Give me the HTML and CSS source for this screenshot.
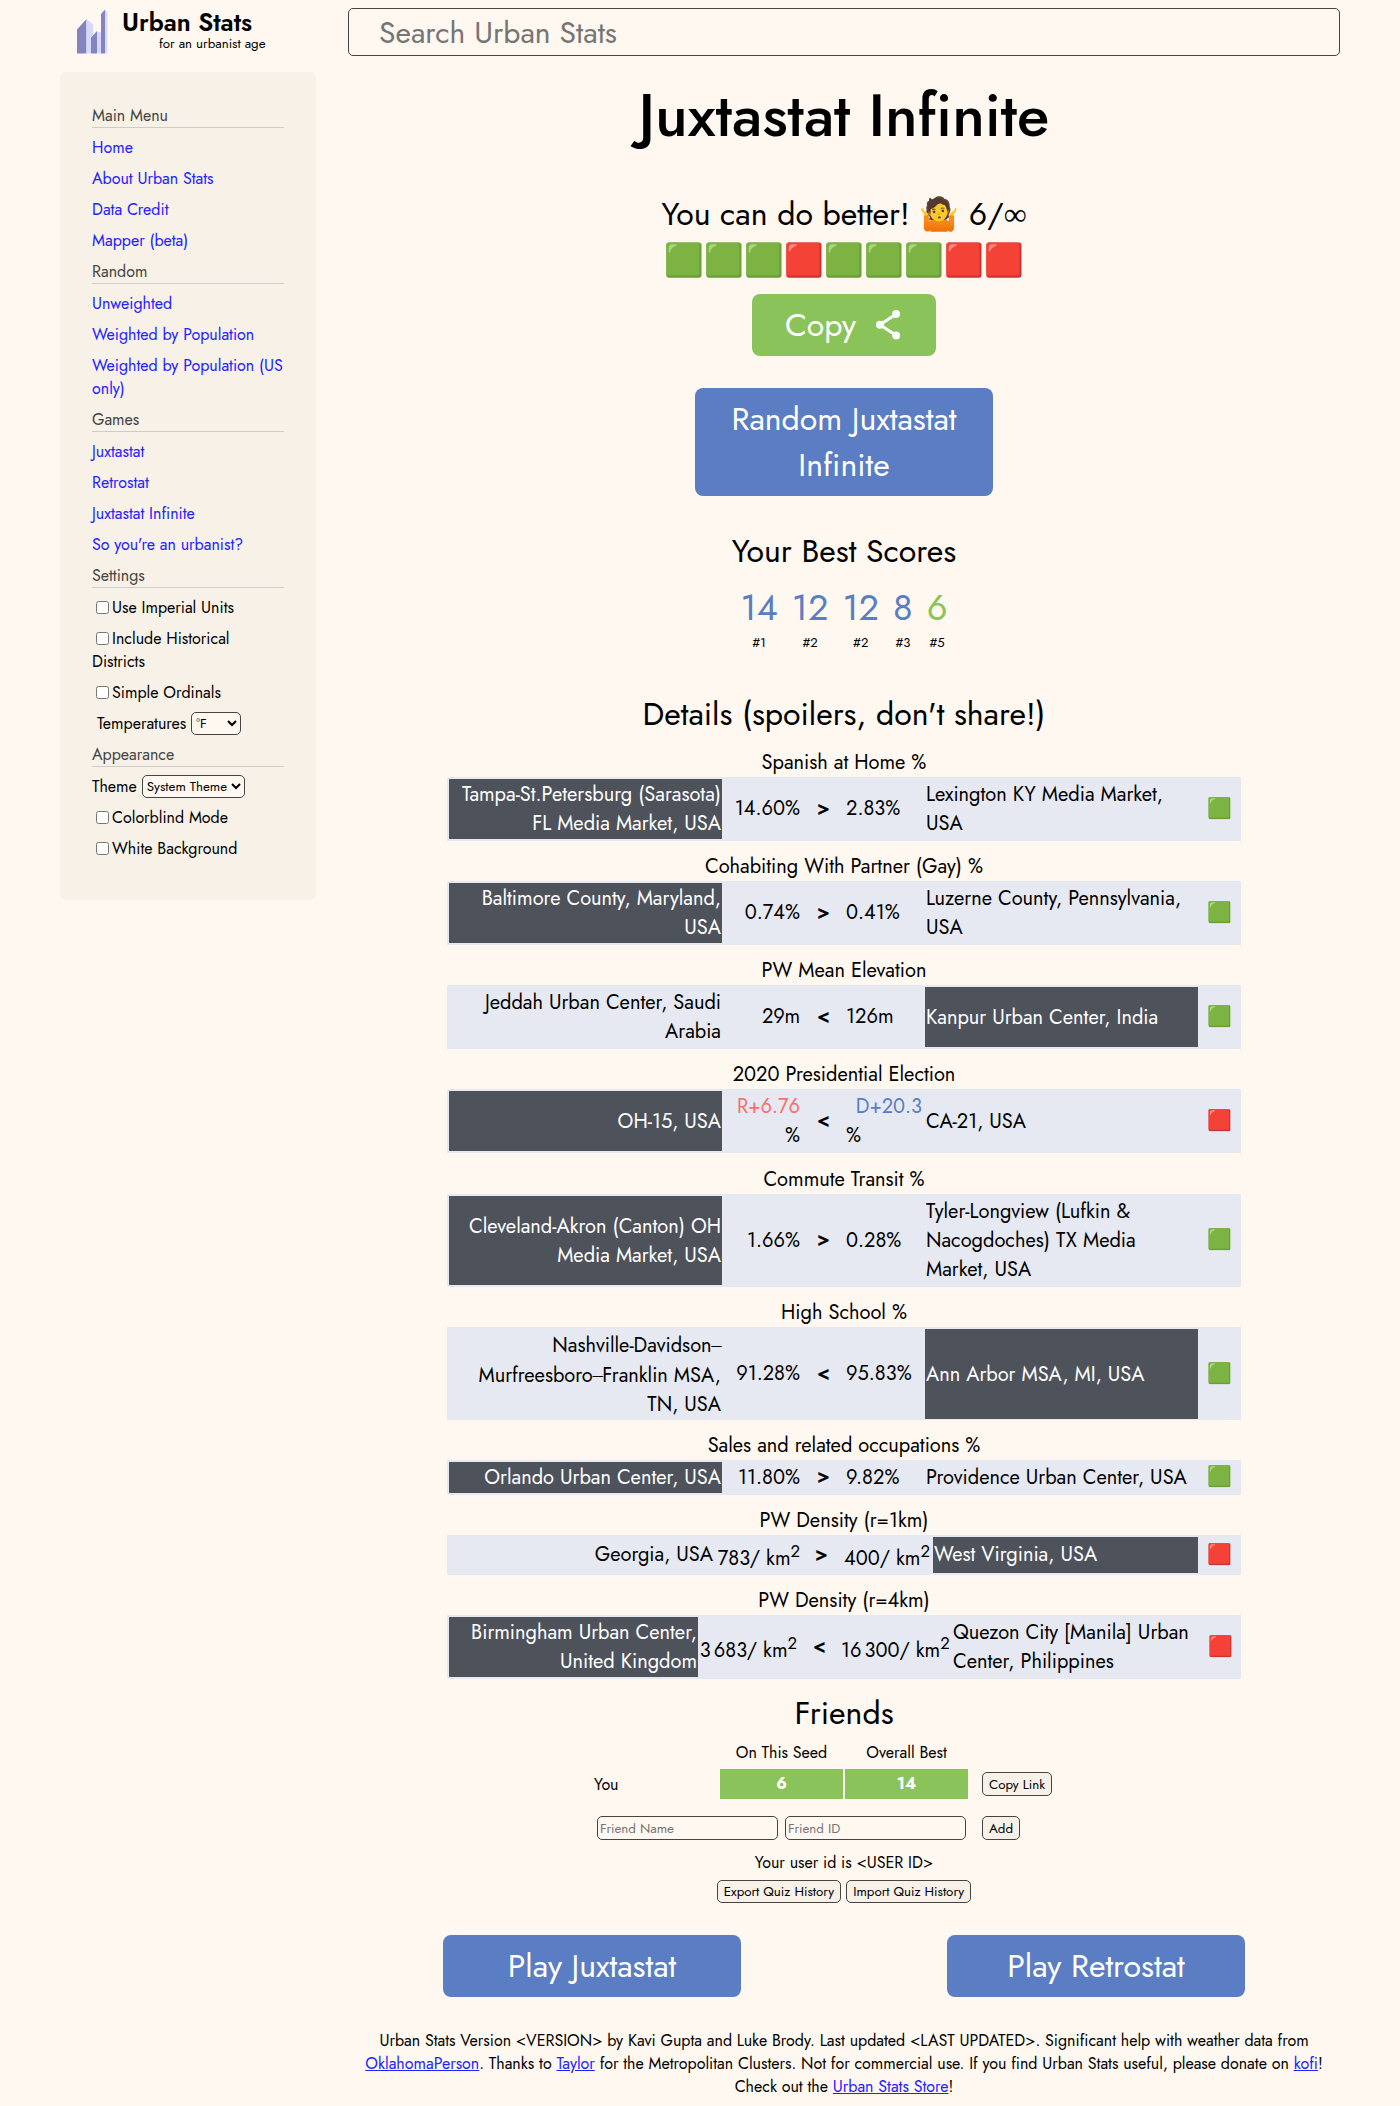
FILE: index.html
```html
<!DOCTYPE html>
<html lang="en">
<head>
<meta charset="utf-8">
<title>Juxtastat Infinite</title>
<link rel="stylesheet" href="styles.css">
</head>
<body>
<header class="header">
  <a class="brand">
    <svg class="brand-mark" width="31" height="45" viewBox="0 0 31 45">
      <path fill="#8585bd" d="M0 20.500 9.500 10V44.500H0zM14 28.500 20 22V44.500H14zM24 5 28 0.500V44.500H24z"/>
      <path fill="#d8d8ff" d="M9.500 10 16 15.500V26.500L14 28.500V44.500H9.500zM20 22 24 24V44.500H20zM28 0.500 30.300 3V44.500H28z"/>
    </svg>
    <span class="brand-text">
      <span class="brand-name">Urban Stats</span>
      <span class="brand-tag">for an urbanist age</span>
    </span>
  </a>
  <input class="search" type="text" placeholder="Search Urban Stats">
</header>
<div class="layout">
  <nav class="sidebar">
    <h2>Main Menu</h2>
    <ul>
      <li><a>Home</a></li>
      <li><a>About Urban Stats</a></li>
      <li><a>Data Credit</a></li>
      <li><a>Mapper (beta)</a></li>
    </ul>
    <h2>Random</h2>
    <ul>
      <li><a>Unweighted</a></li>
      <li><a>Weighted by Population</a></li>
      <li><a>Weighted by Population (US only)</a></li>
    </ul>
    <h2>Games</h2>
    <ul>
      <li><a>Juxtastat</a></li>
      <li><a>Retrostat</a></li>
      <li><a>Juxtastat Infinite</a></li>
      <li><a>So you're an urbanist?</a></li>
    </ul>
    <h2>Settings</h2>
    <ul>
      <li><label><input type="checkbox">Use Imperial Units</label></li>
      <li><label><input type="checkbox">Include Historical Districts</label></li>
      <li><label><input type="checkbox">Simple Ordinals</label></li>
      <li class="field indent"><span>Temperatures</span><select class="select-temp"><option>°F</option></select></li>
    </ul>
    <h2>Appearance</h2>
    <ul>
      <li class="field"><span>Theme</span><select class="select-theme"><option>System Theme</option></select></li>
      <li><label><input type="checkbox">Colorblind Mode</label></li>
      <li><label><input type="checkbox">White Background</label></li>
    </ul>
  </nav>
  <main class="content">
    <h1>Juxtastat Infinite</h1>
    <div class="summary">You can do better! 🤷 6/<span class="sym">∞</span></div>
    <div class="summary">🟩🟩🟩🟥🟩🟩🟩🟥🟥</div>
    <button class="btn btn-copy"><span>Copy</span>
      <svg width="24" height="30" viewBox="0 0 24 30"><path d="M20.200 4 4 14.800 20.200 25.600" fill="none" stroke="#fff" stroke-width="3"/><g fill="#fff"><circle cx="20.200" cy="4" r="4"/><circle cx="4" cy="14.800" r="4"/><circle cx="20.200" cy="25.600" r="4"/></g></svg>
    </button>
    <button class="btn btn-blue btn-random">Random Juxtastat Infinite</button>

    <h2 class="section best-title">Your Best Scores</h2>
    <div class="scores">
      <div class="score"><b>14</b><i>#1</i></div>
      <div class="score"><b>12</b><i>#2</i></div>
      <div class="score"><b>12</b><i>#2</i></div>
      <div class="score"><b>8</b><i>#3</i></div>
      <div class="score current"><b>6</b><i>#5</i></div>
    </div>

    <h2 class="section details-title">Details (spoilers, don't share!)</h2>
    <div class="results">
      <h3>Spanish at Home %</h3>
      <div class="row two">
        <div class="left picked">Tampa-St.Petersburg (Sarasota) FL Media Market, USA</div>
        <div class="val-l">14.60%</div><div class="op">&gt;</div><div class="val-r">2.83%</div>
        <div class="right">Lexington KY Media Market, USA</div>
        <div class="mark">🟩</div>
      </div>
      <h3>Cohabiting With Partner (Gay) %</h3>
      <div class="row two">
        <div class="left picked">Baltimore County, Maryland, USA</div>
        <div class="val-l">0.74%</div><div class="op">&gt;</div><div class="val-r">0.41%</div>
        <div class="right">Luzerne County, Pennsylvania, USA</div>
        <div class="mark">🟩</div>
      </div>
      <h3>PW Mean Elevation</h3>
      <div class="row two">
        <div class="left">Jeddah Urban Center, Saudi Arabia</div>
        <div class="val-l">29m</div><div class="op">&lt;</div><div class="val-r">126m</div>
        <div class="right picked">Kanpur Urban Center, India</div>
        <div class="mark">🟩</div>
      </div>
      <h3>2020 Presidential Election</h3>
      <div class="row two">
        <div class="left picked">OH-15, USA</div>
        <div class="val-l stacked"><span class="rep">R+6.76</span>%</div><div class="op">&lt;</div><div class="val-r stacked"><span class="dem">D+20.3</span>%</div>
        <div class="right">CA-21, USA</div>
        <div class="mark">🟥</div>
      </div>
      <h3 class="tall">Commute Transit %</h3>
      <div class="row three">
        <div class="left picked">Cleveland-Akron (Canton) OH Media Market, USA</div>
        <div class="val-l">1.66%</div><div class="op">&gt;</div><div class="val-r">0.28%</div>
        <div class="right">Tyler-Longview (Lufkin &amp; Nacogdoches) TX Media Market, USA</div>
        <div class="mark">🟩</div>
      </div>
      <h3>High School %</h3>
      <div class="row three">
        <div class="left"><span>Nashville-Davidson<span class="sym dash">–</span>Murfreesboro<span class="sym dash">–</span>Franklin MSA, TN, USA</span></div>
        <div class="val-l">91.28%</div><div class="op">&lt;</div><div class="val-r">95.83%</div>
        <div class="right picked">Ann Arbor MSA, MI, USA</div>
        <div class="mark">🟩</div>
      </div>
      <h3>Sales and related occupations %</h3>
      <div class="row one">
        <div class="left picked">Orlando Urban Center, USA</div>
        <div class="val-l">11.80%</div><div class="op">&gt;</div><div class="val-r">9.82%</div>
        <div class="right">Providence Urban Center, USA</div>
        <div class="mark">🟩</div>
      </div>
      <h3>PW Density (r=1km)</h3>
      <div class="row density-1">
        <div class="left">Georgia, USA</div>
        <div class="val-l"><span>783/ km<sup>2</sup></span></div><div class="op">&gt;</div><div class="val-r"><span>400/ km<sup>2</sup></span></div>
        <div class="right picked">West Virginia, USA</div>
        <div class="mark">🟥</div>
      </div>
      <h3>PW Density (r=4km)</h3>
      <div class="row density-4">
        <div class="left picked">Birmingham Urban Center, United Kingdom</div>
        <div class="val-l"><span>3&#8239;683/ km<sup>2</sup></span></div><div class="op">&lt;</div><div class="val-r"><span>16&#8239;300/ km<sup>2</sup></span></div>
        <div class="right">Quezon City [Manila] Urban Center, Philippines</div>
        <div class="mark">🟥</div>
      </div>
    </div>

    <h2 class="section friends-title">Friends</h2>
    <div class="friends">
      <span></span><span class="col-head">On This Seed</span><span class="col-head">Overall Best</span><span></span>
      <span class="you">You</span><span class="cell">6</span><span class="cell">14</span><button class="small">Copy Link</button>
    </div>
    <div class="add-friend">
      <input type="text" placeholder="Friend Name"><input type="text" placeholder="Friend ID"><button class="small">Add</button>
    </div>
    <div class="user-id">Your user id is &lt;USER ID&gt;</div>
    <div class="history"><button class="small">Export Quiz History</button><button class="small">Import Quiz History</button></div>
    <div class="play">
      <button class="btn btn-blue">Play Juxtastat</button>
      <button class="btn btn-blue">Play Retrostat</button>
    </div>
    <footer>Urban Stats Version &lt;VERSION&gt; by Kavi Gupta and Luke Brody. Last updated &lt;LAST UPDATED&gt;. Significant help with weather data from <a>OklahomaPerson</a>. Thanks to <a>Taylor</a> for the Metropolitan Clusters. Not for commercial use. If you find Urban Stats useful, please donate on <a>kofi</a>! Check out the <a>Urban Stats Store</a>!</footer>
  </main>
</div>
</body>
</html>
```
FILE: styles.css
```css
* { box-sizing: border-box; }
body {
  margin: 0;
  background: #fff8f0;
  color: #000;
  font: 16px/23px Jost, Lato, sans-serif;
}
input, select, button { font-family: inherit; }
ul { list-style: none; margin: 0; padding: 0; }

.header { display: flex; height: 72px; padding: 8px 60px 0; }
.brand { display: flex; width: 288px; padding: 1px 0 0 17px; }
.brand-text { display: flex; flex-direction: column; padding-left: 14px; }
.brand-name { font-size: 25px; font-weight: 600; line-height: 27px; }
.brand-tag { font-size: 13.333px; line-height: 15px; padding-left: 37px; }
.search {
  flex: 1;
  height: 48px;
  padding: 0 30px;
  border: 1px solid #444;
  border-radius: 5px;
  background: #fff8f0;
  font-size: 30px;
}
.search::placeholder { color: #757575; }

.layout { display: flex; align-items: flex-start; padding: 0 60px; }
.sidebar {
  width: 256px;
  padding: 32px 32px 32px;
  border-radius: 5px;
  background: #f7f1e8;
}
.sidebar h2 {
  margin: 0 0 8px;
  border-bottom: 1px solid #ccc;
  color: #444;
  font-size: 16px;
  font-weight: 400;
}
.sidebar li { margin-bottom: 8px; }
.sidebar a { color: #2222ff; }
.sidebar input { margin: 3px 3px 3px 4px; vertical-align: -1px; }
.field { display: flex; align-items: center; height: 23px; gap: 5px; }
.indent { padding-left: 5px; }
select {
  height: 23px;
  padding: 0;
  border: 1px solid #444;
  border-radius: 5px;
  background: #fff8f0;
  font-size: 13.333px;
}
.select-temp { width: 50px; }
.select-theme { width: 103px; }

.content {
  display: flex;
  flex-direction: column;
  align-items: center;
  width: 992px;
  margin-left: 32px;
}
.sym { font-family: "Liberation Serif", serif; }
.dash { letter-spacing: -0.6px; }
h1 { margin: 0; font-size: 60px; font-weight: 500; line-height: 87px; }
.summary { font-size: 32px; line-height: 46px; }
h1 + .summary { margin-top: 32px; }
.btn {
  display: flex;
  align-items: center;
  justify-content: center;
  height: 62px;
  padding: 0 32px;
  border: 0;
  border-radius: 8px;
  color: #fff;
  font-size: 32px;
  line-height: 46px;
}
.btn-copy { width: 184px; margin-top: 11px; padding-right: 35px; gap: 20px; background: #8ac35a; }
.btn-blue { width: 298px; background: #5a7dc3; }
.btn-random { height: 108px; margin-top: 32px; }
.section { margin: 0; font-size: 32px; font-weight: 400; line-height: 46px; }
.best-title { margin-top: 32px; }
.scores { display: flex; gap: 14px; margin-top: 7px; }
.score { display: flex; flex-direction: column; align-items: center; }
.score b { color: #5a7dc3; font-size: 36px; font-weight: 400; line-height: 52px; }
.score i { font-size: 13px; font-style: normal; line-height: 19px; }
.score.current b { color: #8ac35a; }
.details-title { margin-top: 39px; }

.results { width: 794px; font-size: 20px; line-height: 28.8px; }
.results h3 {
  height: 40px;
  margin: 0;
  padding-top: 12px;
  font-size: 20px;
  font-weight: 400;
  line-height: 28px;
  text-align: center;
}
.results h3.tall { height: 41px; padding-top: 13px; }
.row {
  display: grid;
  grid-template-columns: 273px 78px 39px 78px 273px 39px;
  gap: 2px;
  padding: 2px;
  background: #e6e9f1;
}
.row > div { display: flex; align-items: center; }
.two { height: 64px; }
.three { height: 93px; }
.one { height: 35px; }
.density-1 { height: 40px; grid-template-columns: 265px 84px 39px 88px 265px 39px; }
.density-4 { height: 64px; grid-template-columns: 249px 99px 37px 110px 247px 38px; }
.row .left { justify-content: flex-end; padding: 2px 1px 0; text-align: right; }
.row .right { padding: 2px 1px 0; }
.row .val-l { justify-content: flex-end; padding: 1px 2px 0 0; }
.row .val-r { padding: 1px 0 0 1px; }
.row.density-1 > div { padding-top: 0; }
.row.density-1 .val-l { padding-right: 0; }
.row .val-l, .row .val-r { white-space: nowrap; }
.row .op, .row .mark { justify-content: center; }
.row .op { font-weight: 600; }
.row .picked { background: #4e525a; color: #fff; }
.row .stacked { flex-direction: column; justify-content: center; padding-top: 2px; }
.row .val-l.stacked { align-items: flex-end; }
.row .val-r.stacked { align-items: flex-start; }
.rep { color: #f96d6d; }
.dem { align-self: flex-end; padding-right: 1px; color: #5a7dc3; }

.friends-title { margin-top: 11px; }
.friends {
  display: grid;
  grid-template-columns: 124px 123px 123px auto;
  column-gap: 2px;
  align-items: center;
  align-self: flex-start;
  margin-left: 246px;
}
.col-head { height: 33px; padding-top: 5px; text-align: center; }
.cell { height: 30px; background: #8ac35a; color: #fff; font-weight: 700; line-height: 30px; text-align: center; }
.small {
  height: 24px;
  padding: 0 6px;
  border: 1px solid #444;
  border-radius: 5px;
  background: #f7f1e8;
  color: #000;
  font-size: 13.333px;
}
.friends .small { margin-left: 12px; }
.add-friend { display: flex; align-self: flex-start; margin: 17px 0 0 249px; }
.add-friend input {
  width: 181px;
  height: 24px;
  margin-right: 7px;
  padding: 1px 2px;
  border: 1px solid #444;
  border-radius: 5px;
  background: #fff8f0;
  font-size: 13.333px;
}
.add-friend .small { margin-left: 9px; }
.user-id { margin-top: 11px; }
.history { display: flex; gap: 5px; margin-top: 6px; }
.history .small { height: 23px; }
.play { display: flex; justify-content: space-between; width: 802px; margin-top: 32px; }
footer { width: 968px; margin-top: 32px; text-align: center; }
footer a { color: #2222ff; text-decoration: underline; }
```
